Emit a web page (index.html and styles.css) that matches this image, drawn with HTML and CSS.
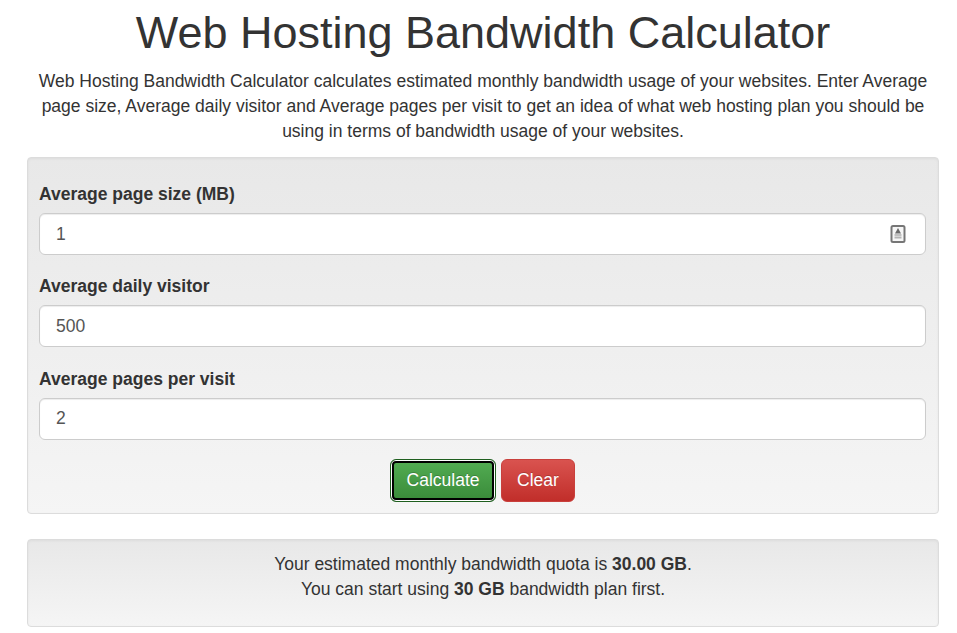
FILE: index.html
```html
<!DOCTYPE html>
<html lang="en">
<head>
<meta charset="utf-8">
<title>Web Hosting Bandwidth Calculator</title>
<link rel="stylesheet" href="styles.css">
</head>
<body>
<main class="container">
  <h1 class="title">Web Hosting Bandwidth Calculator</h1>
  <p class="lead">Web Hosting Bandwidth Calculator calculates estimated monthly bandwidth usage of your websites. Enter Average page size, Average daily visitor and Average pages per visit to get an idea of what web hosting plan you should be using in terms of bandwidth usage of your websites.</p>
  <form class="well form">
    <div class="group">
      <label class="label" for="size">Average page size (MB)</label>
      <div class="field">
        <input class="input" id="size" type="text" value="1">
        <svg class="spin" width="16" height="18" viewBox="0 0 16 18" aria-hidden="true">
          <rect x="1.5" y="1" width="13" height="16" rx="1.5" fill="#f6f6f6" stroke="#767676" stroke-width="2"/>
          <path d="M8 3 5 8.5h6z" fill="#6a6a6a"/>
          <rect x="4.5" y="9.5" width="7" height="1" fill="#8a8a8a"/>
          <rect x="4.5" y="11.5" width="7" height="2" fill="#b4b4b4"/>
        </svg>
      </div>
    </div>
    <div class="group">
      <label class="label" for="visitor">Average daily visitor</label>
      <div class="field"><input class="input" id="visitor" type="text" value="500"></div>
    </div>
    <div class="group">
      <label class="label" for="pages">Average pages per visit</label>
      <div class="field"><input class="input" id="pages" type="text" value="2"></div>
    </div>
    <div class="actions">
      <button class="btn btn-green" type="button">Calculate</button>
      <button class="btn btn-red" type="button">Clear</button>
    </div>
  </form>
  <div class="well result">
    <div>Your estimated monthly bandwidth quota is <b>30.00 GB</b>.</div>
    <div>You can start using <b>30 GB</b> bandwidth plan first.</div>
  </div>
</main>
</body>
</html>
```
FILE: styles.css
```css
* { box-sizing: border-box; }
html, body { margin: 0; padding: 0; background: #fff; }
body {
  font-family: "Liberation Sans", Arial, sans-serif;
  font-size: 17.5px;
  line-height: 25px;
  color: #333;
  overflow: hidden;
}
.container { width: 912px; margin-left: 27px; }
.title {
  margin: 0;
  padding-top: 8px;
  height: 69px;
  font-size: 45px;
  line-height: 50px;
  font-weight: 400;
  text-align: center;
}
.lead {
  margin: 0 0 13px;
  text-align: center;
  height: 75px;
  line-height: 25px;
}
.well {
  border: 1px solid #dcdcdc;
  border-radius: 4px;
  background: linear-gradient(to bottom, #e8e8e8, #f5f5f5);
  box-shadow: inset 0 1px 3px rgba(0,0,0,.05), 0 1px 0 rgba(255,255,255,.1);
}
.form { height: 357px; padding: 24px 12px 0 11px; margin-bottom: 25px; }
.group { margin-bottom: 19.2px; }
.label { display: block; font-weight: 700; line-height: 25px; margin-bottom: 6px; }
.field { position: relative; }
.input {
  display: block;
  width: 100%;
  height: 42.1px;
  padding: 0 16px;
  border: 1px solid #ccc;
  border-radius: 6px;
  background: #fff;
  font: 17.5px "Liberation Sans", Arial, sans-serif;
  color: #555;
  box-shadow: inset 0 1px 1px rgba(0,0,0,.075);
}
.spin { position: absolute; right: 20px; top: 12px; }
.actions { display: flex; justify-content: center; gap: 5px; }
.btn {
  height: 43px;
  padding: 0;
  border: 1px solid transparent;
  border-radius: 6px;
  font: 17.5px "Liberation Sans", Arial, sans-serif;
  color: #fff;
  text-shadow: 0 -1px 0 rgba(0,0,0,.2);
}
.btn-green {
  width: 106px;
  border-color: #1f5f1f;
  background: linear-gradient(to bottom, #53ad53, #398a39);
  box-shadow: inset 0 0 0 1px #fff, inset 0 0 0 3px #000;
}
.btn-red {
  width: 74px;
  border-color: #c9403c;
  background: linear-gradient(to bottom, #d9534f, #c12e2a);
}
.result {
  height: 88px;
  padding-top: 12px;
  text-align: center;
}
.result div { height: 25px; }
```
